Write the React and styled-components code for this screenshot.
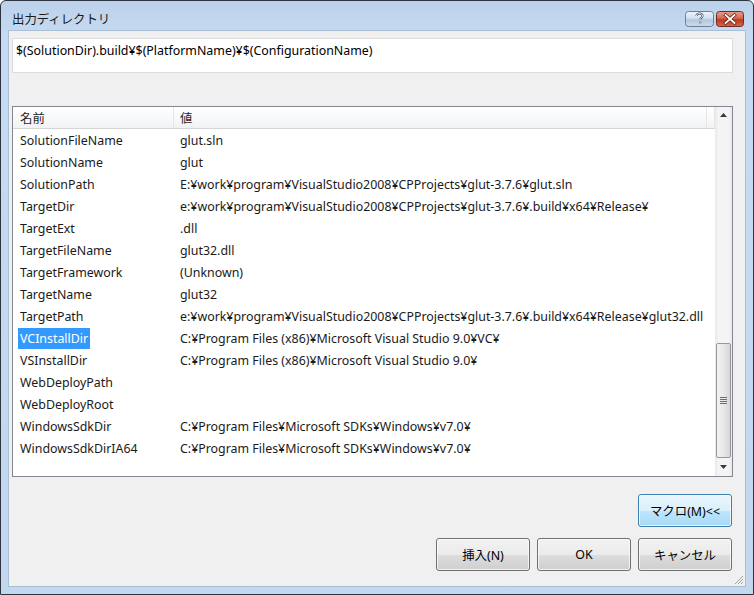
import styled, { createGlobalStyle } from "styled-components";

const GlobalStyle = createGlobalStyle`
  html, body {
    margin: 0;
    padding: 0;
    background: #ffffff;
  }
  * {
    box-sizing: border-box;
  }
`;

const FONT = `"Noto Sans", "Noto Sans CJK JP", sans-serif`;

const Window = styled.div`
  width: 754px;
  height: 595px;
  border: 1px solid #2b3440;
  border-radius: 6px 6px 0 0;
  background: linear-gradient(180deg, #bcd2ea 0%, #c6dbf1 6%, #c3d8ee 100%);
  display: flex;
  flex-direction: column;
  padding: 0 7px 7px 7px;
  font-family: ${FONT};
  font-size: 12.4px;
  color: #000;
  overflow: hidden;
`;

const TitleBar = styled.div`
  height: 29px;
  flex: none;
  display: flex;
  align-items: flex-start;
  justify-content: space-between;
  padding: 0 2px 0 4px;
`;

const TitleText = styled.span`
  font-size: 12.4px;
  color: #1a1a1a;
  margin-top: 9px;
`;

const CaptionButtons = styled.div`
  display: flex;
  gap: 2px;
  margin-top: 10px;
`;

const CaptionIcon = styled.svg`
  display: block;
`;

const Client = styled.div`
  flex: 1;
  background: #f0f0f0;
  border: 1px solid #a9bfd6;
  display: flex;
  flex-direction: column;
  padding: 7px 12px 0 3px;
`;

const PathBox = styled.div`
  height: 35px;
  flex: none;
  background: #ffffff;
  border: 1px solid #dcdcdc;
  padding: 3px 3px;
  line-height: 17px;
`;

const List = styled.div`
  margin-top: 33px;
  height: 371px;
  flex: none;
  background: #ffffff;
  border: 1px solid #828790;
  display: flex;
`;

const ListBody = styled.div`
  flex: 1;
  display: flex;
  flex-direction: column;
  min-width: 0;
`;

const Header = styled.div`
  height: 22px;
  flex: none;
  display: flex;
  background: linear-gradient(180deg, #ffffff 0%, #f7f8fa 60%, #f1f2f4 100%);
  border-bottom: 1px solid #d5d5d5;
`;

const HeaderCell = styled.div`
  width: ${(p) => p.$width || "auto"};
  flex: ${(p) => (p.$grow ? 1 : "none")};
  padding-left: ${(p) => p.$pad || "7px"};
  display: flex;
  align-items: center;
  border-right: 1px solid #e5e5e5;
  color: #1e1e1e;
`;

const Row = styled.div`
  height: 22px;
  flex: none;
  display: flex;
  align-items: center;
  white-space: nowrap;
`;

const NameCell = styled.div`
  width: 161px;
  padding-left: 5px;
  flex: none;
`;

const NameText = styled.span`
  display: inline-block;
  padding: 0 2px;
  line-height: 21px;
  background: ${(p) => (p.$selected ? "#3399ff" : "transparent")};
  color: ${(p) => (p.$selected ? "#ffffff" : "#1a1a1a")};
`;

const ValueCell = styled.div`
  padding-left: 6px;
  color: #1a1a1a;
`;

const ScrollBar = styled.div`
  width: 17px;
  flex: none;
  background: linear-gradient(90deg, #e9e9e9 0%, #f4f4f4 20%, #f4f4f4 80%, #e9e9e9 100%);
  display: flex;
  flex-direction: column;
  align-items: center;
`;

const Arrow = styled.div`
  height: ${(p) => p.$h || "17px"};
  width: 17px;
  display: flex;
  align-items: center;
  justify-content: center;
`;

const Track = styled.div`
  flex: 1;
  width: 100%;
  display: flex;
  flex-direction: column;
  padding-top: 220px;
`;

const Thumb = styled.div`
  height: 115px;
  margin: 0 1px;
  border: 1px solid #979797;
  border-radius: 2px;
  background: linear-gradient(90deg, #f3f3f3 0%, #e8e8e8 50%, #d6d6d6 100%);
  display: flex;
  align-items: center;
  justify-content: center;
`;

const ButtonArea = styled.div`
  display: flex;
  flex-direction: column;
  align-items: flex-end;
  margin-top: 17px;
  gap: 11px;
  padding-right: 1px;
`;

const ButtonRow = styled.div`
  display: flex;
  gap: 7px;
`;

const Button = styled.button`
  width: 94px;
  height: 33px;
  font-family: ${FONT};
  font-size: 12.4px;
  color: #000;
  border-radius: 3px;
  border: 1px solid ${(p) => (p.$focus ? "#3c7fb1" : "#707070")};
  background: ${(p) =>
    p.$focus
      ? "linear-gradient(180deg, #eaf6fd 0%, #d9f0fc 50%, #bee6fd 51%, #a7d9f5 100%)"
      : "linear-gradient(180deg, #f2f2f2 0%, #ebebeb 50%, #dddddd 51%, #cfcfcf 100%)"};
  box-shadow: inset 0 0 0 1px rgba(255, 255, 255, 0.7);
  padding: 0;
`;

const Grip = styled.div`
  align-self: flex-end;
  margin-top: auto;
  margin-right: -11px;
  margin-bottom: 1px;
  width: 11px;
  height: 11px;
  display: flex;
`;

const rows = [
  ["SolutionFileName", "glut.sln"],
  ["SolutionName", "glut"],
  ["SolutionPath", "E:¥work¥program¥VisualStudio2008¥CPProjects¥glut-3.7.6¥glut.sln"],
  ["TargetDir", "e:¥work¥program¥VisualStudio2008¥CPProjects¥glut-3.7.6¥.build¥x64¥Release¥"],
  ["TargetExt", ".dll"],
  ["TargetFileName", "glut32.dll"],
  ["TargetFramework", "(Unknown)"],
  ["TargetName", "glut32"],
  ["TargetPath", "e:¥work¥program¥VisualStudio2008¥CPProjects¥glut-3.7.6¥.build¥x64¥Release¥glut32.dll"],
  ["VCInstallDir", "C:¥Program Files (x86)¥Microsoft Visual Studio 9.0¥VC¥"],
  ["VSInstallDir", "C:¥Program Files (x86)¥Microsoft Visual Studio 9.0¥"],
  ["WebDeployPath", ""],
  ["WebDeployRoot", ""],
  ["WindowsSdkDir", "C:¥Program Files¥Microsoft SDKs¥Windows¥v7.0¥"],
  ["WindowsSdkDirIA64", "C:¥Program Files¥Microsoft SDKs¥Windows¥v7.0¥"],
];

const SELECTED = "VCInstallDir";

function HelpIcon() {
  return (
    <CaptionIcon width="29" height="16" viewBox="0 0 29 16">
      <defs>
        <linearGradient id="helpFace" x1="0" y1="0" x2="0" y2="1">
          <stop offset="0" stopColor="#eef4fb" />
          <stop offset="0.45" stopColor="#d2e0ef" />
          <stop offset="0.55" stopColor="#b4c7dd" />
          <stop offset="1" stopColor="#cadbed" />
        </linearGradient>
      </defs>
      <rect x="0.5" y="0.5" width="28" height="15" rx="3" fill="url(#helpFace)" stroke="#6f7f93" />
      <path
        d="M11.5 5 C11.5 3.2 13 2.5 14.5 2.5 C16.3 2.5 17.5 3.5 17.5 5 C17.5 6.6 15.2 7 15.2 8.8 M15.2 10.6 V12.2"
        fill="none"
        stroke="#3d4d62"
        strokeWidth="2"
      />
      <path
        d="M11.5 5 C11.5 3.2 13 2.5 14.5 2.5 C16.3 2.5 17.5 3.5 17.5 5 C17.5 6.6 15.2 7 15.2 8.8 M15.2 10.6 V12.2"
        fill="none"
        stroke="#ffffff"
        strokeWidth="0.9"
      />
    </CaptionIcon>
  );
}

function CloseIcon() {
  return (
    <CaptionIcon width="28" height="16" viewBox="0 0 28 16">
      <defs>
        <linearGradient id="closeFace" x1="0" y1="0" x2="0" y2="1">
          <stop offset="0" stopColor="#e6a191" />
          <stop offset="0.45" stopColor="#d5674f" />
          <stop offset="0.55" stopColor="#c03722" />
          <stop offset="1" stopColor="#d46a48" />
        </linearGradient>
      </defs>
      <rect x="0.5" y="0.5" width="27" height="15" rx="3" fill="url(#closeFace)" stroke="#6d2a22" />
      <path d="M9.5 4 L18.5 12 M18.5 4 L9.5 12" stroke="#6b1f16" strokeWidth="3.2" strokeLinecap="square" />
      <path d="M9.5 4 L18.5 12 M18.5 4 L9.5 12" stroke="#ffffff" strokeWidth="1.7" strokeLinecap="square" />
    </CaptionIcon>
  );
}

function App() {
  return (
    <>
      <GlobalStyle />
      <Window>
        <TitleBar>
          <TitleText>出力ディレクトリ</TitleText>
          <CaptionButtons>
            <HelpIcon />
            <CloseIcon />
          </CaptionButtons>
        </TitleBar>
        <Client>
          <PathBox>$(SolutionDir).build¥$(PlatformName)¥$(ConfigurationName)</PathBox>
          <List>
            <ListBody>
              <Header>
                <HeaderCell $width="161px">名前</HeaderCell>
                <HeaderCell $width="533px" $pad="6px">値</HeaderCell>
                <HeaderCell $grow />
              </Header>
              {rows.map(([name, value]) => (
                <Row key={name}>
                  <NameCell>
                    <NameText $selected={name === SELECTED}>{name}</NameText>
                  </NameCell>
                  <ValueCell>{value}</ValueCell>
                </Row>
              ))}
            </ListBody>
            <ScrollBar>
              <Arrow>
                <svg width="7" height="4" viewBox="0 0 7 4">
                  <path d="M0 4 L3.5 0 L7 4 Z" fill="#3a3a3a" />
                </svg>
              </Arrow>
              <Track>
                <Thumb>
                  <svg width="7" height="8" viewBox="0 0 7 8">
                    <path d="M0 1.5 H7 M0 3.5 H7 M0 5.5 H7 M0 7.5 H7" stroke="#6f6f6f" strokeWidth="1" />
                  </svg>
                </Thumb>
              </Track>
              <Arrow $h="20px">
                <svg width="7" height="4" viewBox="0 0 7 4">
                  <path d="M0 0 L7 0 L3.5 4 Z" fill="#3a3a3a" />
                </svg>
              </Arrow>
            </ScrollBar>
          </List>
          <ButtonArea>
            <Button $focus>マクロ(M)&lt;&lt;</Button>
            <ButtonRow>
              <Button>挿入(N)</Button>
              <Button>OK</Button>
              <Button>キャンセル</Button>
            </ButtonRow>
          </ButtonArea>
          <Grip>
            <svg width="11" height="11" viewBox="0 0 11 11">
              <path d="M10 2 L2 10 M10 5 L5 10 M10 8 L8 10" stroke="#a0a0a0" strokeWidth="1" />
            </svg>
          </Grip>
        </Client>
      </Window>
    </>
  );
}

export default App;
